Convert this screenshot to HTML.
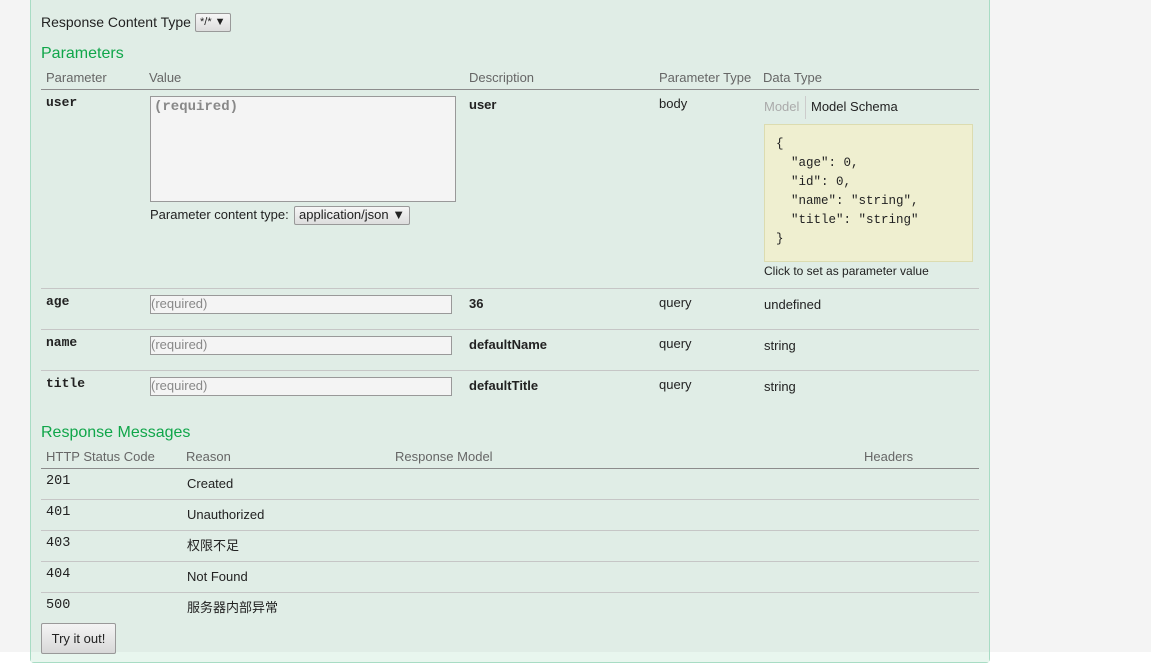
<!DOCTYPE html>
<html><head><meta charset="utf-8"><style>
*{margin:0;padding:0;box-sizing:border-box}
body{width:1157px;height:664px;background:#fff;position:relative;overflow:hidden;font-family:"Liberation Sans","Noto Sans CJK SC",sans-serif;font-size:13px;color:#222}
.bg{position:absolute;left:0;top:0;width:1151px;height:652px;background:#f4f4f4}
.panel{position:absolute;left:30px;top:-4px;width:960px;height:667px;background:#e0ede6;border:1px solid #a8dcc4;border-top:none;border-radius:0 0 4px 4px}
.low{position:absolute;left:31px;top:652px;width:958px;height:10px;background:#e8f6ee}
.a{position:absolute;white-space:nowrap;line-height:16px}
.h{color:#10a64a;font-size:16px}
.th{color:#666;font-size:13px}
.b{font-weight:bold}
.m{font-family:"Liberation Mono",monospace}
.ln{position:absolute;left:41px;width:938px;height:1px;background:#c6c6c6}
.ln.d{background:#8c8c8c}
.inp{position:absolute;background:#f4f4f4;border:1px solid #999;color:#888;font-size:13px;line-height:16px;padding-left:0}
.sel{position:absolute;background:linear-gradient(#f6f6f6,#ddd);border:1px solid #999;border-radius:2px;font-size:13px;line-height:16px;padding:0 4px}
</style></head><body>
<div class="bg"></div>
<div class="panel"></div>
<div class="low"></div>

<div class="a" style="left:41px;top:14px;font-size:14px">Response Content Type</div>
<div class="sel" style="left:195px;top:13px;height:19px;font-size:11px;line-height:17px">*/* ▼</div>

<div class="a h" style="left:41px;top:46px">Parameters</div>
<div class="a th" style="left:46px;top:70px">Parameter</div>
<div class="a th" style="left:149px;top:70px">Value</div>
<div class="a th" style="left:469px;top:70px">Description</div>
<div class="a th" style="left:659px;top:70px">Parameter Type</div>
<div class="a th" style="left:763px;top:70px">Data Type</div>
<div class="ln d" style="top:89px"></div>

<div class="a b m" style="left:46px;top:95px">user</div>
<div class="inp m" style="left:150px;top:96px;width:306px;height:106px;padding:2px 3px;font-weight:bold;font-size:14px">(required)</div>
<div class="a" style="left:150px;top:207px">Parameter content type:</div>
<div class="sel" style="left:294px;top:206px;height:19px">application/json ▼</div>
<div class="a b" style="left:469px;top:97px">user</div>
<div class="a" style="left:659px;top:96px">body</div>
<div class="a" style="left:764px;top:99px;color:#aaa">Model</div>
<div style="position:absolute;left:805px;top:96px;width:1px;height:23px;background:#ccc"></div>
<div class="a" style="left:811px;top:99px">Model Schema</div>
<div style="position:absolute;left:764px;top:124px;width:209px;height:138px;background:#efefd0;border:1px solid #dcdcb0"></div>
<pre class="a m" style="left:776px;top:135px;line-height:19px;font-size:12.5px;white-space:pre">{
  "age": 0,
  "id": 0,
  "name": "string",
  "title": "string"
}</pre>
<div class="a" style="left:764px;top:263px;font-size:12px">Click to set as parameter value</div>
<div class="ln" style="top:288px"></div>

<div class="a b m" style="left:46px;top:294px">age</div>
<div class="inp" style="left:150px;top:295px;width:302px;height:19px">(required)</div>
<div class="a b" style="left:469px;top:296px">36</div>
<div class="a" style="left:659px;top:295px">query</div>
<div class="a" style="left:764px;top:297px">undefined</div>
<div class="ln" style="top:329px"></div>

<div class="a b m" style="left:46px;top:335px">name</div>
<div class="inp" style="left:150px;top:336px;width:302px;height:19px">(required)</div>
<div class="a b" style="left:469px;top:337px">defaultName</div>
<div class="a" style="left:659px;top:336px">query</div>
<div class="a" style="left:764px;top:338px">string</div>
<div class="ln" style="top:370px"></div>

<div class="a b m" style="left:46px;top:376px">title</div>
<div class="inp" style="left:150px;top:377px;width:302px;height:19px">(required)</div>
<div class="a b" style="left:469px;top:378px">defaultTitle</div>
<div class="a" style="left:659px;top:377px">query</div>
<div class="a" style="left:764px;top:379px">string</div>

<div class="a h" style="left:41px;top:425px">Response Messages</div>
<div class="a th" style="left:46px;top:449px">HTTP Status Code</div>
<div class="a th" style="left:186px;top:449px">Reason</div>
<div class="a th" style="left:395px;top:449px">Response Model</div>
<div class="a th" style="left:864px;top:449px">Headers</div>
<div class="ln d" style="top:468px"></div>

<div class="a m" style="left:46px;top:474px;font-size:13.5px">201</div><div class="a" style="left:187px;top:476px">Created</div>
<div class="ln" style="top:499px"></div>
<div class="a m" style="left:46px;top:505px;font-size:13.5px">401</div><div class="a" style="left:187px;top:507px">Unauthorized</div>
<div class="ln" style="top:530px"></div>
<div class="a m" style="left:46px;top:536px;font-size:13.5px">403</div><div class="a" style="left:187px;top:538px">权限不足</div>
<div class="ln" style="top:561px"></div>
<div class="a m" style="left:46px;top:567px;font-size:13.5px">404</div><div class="a" style="left:187px;top:569px">Not Found</div>
<div class="ln" style="top:592px"></div>
<div class="a m" style="left:46px;top:598px;font-size:13.5px">500</div><div class="a" style="left:187px;top:600px">服务器内部异常</div>

<div style="position:absolute;left:41px;top:623px;width:75px;height:31px;background:linear-gradient(#f4f4f4,#d8d8d8);border:1px solid #999;border-radius:2px;font-size:13px;line-height:29px;text-align:center">Try it out!</div>
</body></html>
